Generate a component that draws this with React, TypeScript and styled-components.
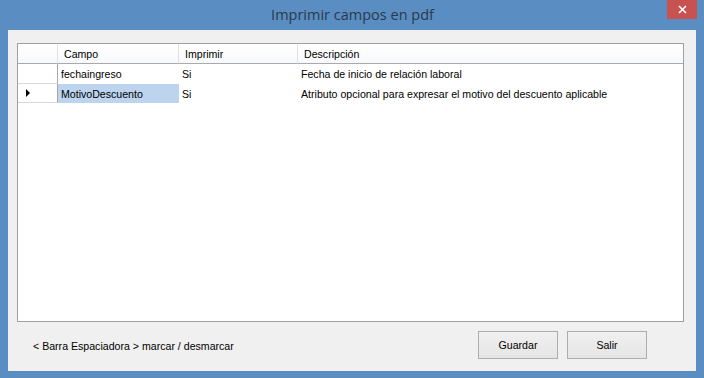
import React from "react";
import styled, { createGlobalStyle } from "styled-components";

const GlobalStyle = createGlobalStyle`
  html, body {
    margin: 0;
    padding: 0;
    background: #5a8dc1;
  }
  body {
    font-family: "Liberation Sans", Arial, sans-serif;
  }
`;

interface Campo {
  nombre: string
  imprimir: string
  descripcion: string
}

const campos: Campo[] = [
  { nombre: "fechaingreso", imprimir: "Si", descripcion: "Fecha de inicio de relación laboral" },
  { nombre: "MotivoDescuento", imprimir: "Si", descripcion: "Atributo opcional para expresar el motivo del descuento aplicable" },
];

const Window = styled.div`
  width: 704px;
  height: 378px;
  box-sizing: border-box;
  background: #5a8dc1;
  padding: 0 8px 7px 8px;
  display: flex;
  flex-direction: column;
`;

const TitleBar = styled.div`
  height: 30px;
  display: grid;
  grid-template-columns: 1fr auto 1fr;
  align-items: start;
  margin-right: -1px;
`;

const Title = styled.div`
  grid-column: 2;
  font-family: "Open Sans", "Noto Sans", sans-serif;
  font-size: 14.5px;
  color: #2a3a4c;
  line-height: 30px;
`;

const CloseButton = styled.div`
  grid-column: 3;
  justify-self: end;
  width: 30px;
  height: 19px;
  background: #c8524f;
  color: #ffffff;
  display: flex;
  align-items: center;
  justify-content: center;
`;

const Client = styled.div`
  flex: 1;
  background: #f0f0f0;
  display: flex;
  flex-direction: column;
  padding: 13px 12px 0 9px;
`;

const Grid = styled.div`
  height: 279px;
  box-sizing: border-box;
  border: 1px solid #a0a0a0;
  background: #ffffff;
  font-size: 10.6px;
  color: #000000;
`;

const Row = styled.div<{ $height: number }>`
  display: grid;
  grid-template-columns: 40px 121px 119px 1fr;
  height: ${({ $height }) => $height}px;
`;

const HeaderCell = styled.div`
  box-sizing: border-box;
  border-right: 1px solid #e1e1e1;
  border-bottom: 1px solid #a9a9a9;
  background: linear-gradient(#ffffff, #f8f9fb);
  padding-left: 6px;
  display: flex;
  align-items: center;
  &:last-child {
    border-right: none;
  }
`;

const RowHeader = styled.div`
  box-sizing: border-box;
  border-right: 1px solid #a9a9a9;
  border-bottom: 1px solid #d9d9d9;
  background: #ffffff;
  display: flex;
  align-items: center;
  padding-left: 8px;
`;

const Cell = styled.div<{ $selected?: boolean }>`
  box-sizing: border-box;
  padding-left: 3px;
  display: flex;
  align-items: center;
  white-space: nowrap;
  background: ${({ $selected }) => ($selected ? "#bcd4ee" : "transparent")};
`;

const Footer = styled.div`
  flex: 1;
  display: flex;
  align-items: center;
  padding: 0 37px 4px 16px;
`;

const Hint = styled.div`
  flex: 1;
  font-size: 10.6px;
  color: #000000;
  margin-top: 2px;
`;

const Button = styled.div`
  width: 80px;
  height: 28px;
  box-sizing: border-box;
  border: 1px solid #adadad;
  background: linear-gradient(#f0f0f0, #e5e5e5);
  font-size: 10.6px;
  color: #000000;
  display: flex;
  align-items: center;
  justify-content: center;
  & + & {
    margin-left: 9px;
  }
`;

const Arrow = () => (
  <svg width="5" height="8" viewBox="0 0 5 8">
    <path d="M0 0 L4 4 L0 8 Z" fill="#000" />
  </svg>
);

const CloseIcon = () => (
  <svg width="9" height="9" viewBox="0 0 9 9">
    <path d="M1 1 L8 8 M8 1 L1 8" stroke="#ffffff" strokeWidth="1.6" />
  </svg>
);

const App: React.FC = () => {
  const selected = 1

  return (
    <>
      <GlobalStyle />
      <Window>
        <TitleBar>
          <Title>Imprimir campos en pdf</Title>
          <CloseButton>
            <CloseIcon />
          </CloseButton>
        </TitleBar>
        <Client>
          <Grid>
            <Row $height={20}>
              <HeaderCell />
              <HeaderCell>Campo</HeaderCell>
              <HeaderCell>Imprimir</HeaderCell>
              <HeaderCell>Descripción</HeaderCell>
            </Row>
            {campos.map((c, i) => (
              <Row key={c.nombre} $height={i === 0 ? 20 : 19}>
                <RowHeader>{i === selected && <Arrow />}</RowHeader>
                <Cell $selected={i === selected}>{c.nombre}</Cell>
                <Cell>{c.imprimir}</Cell>
                <Cell>{c.descripcion}</Cell>
              </Row>
            ))}
          </Grid>
          <Footer>
            <Hint>&lt; Barra Espaciadora &gt; marcar / desmarcar</Hint>
            <Button>Guardar</Button>
            <Button>Salir</Button>
          </Footer>
        </Client>
      </Window>
    </>
  );
};

export default App;
